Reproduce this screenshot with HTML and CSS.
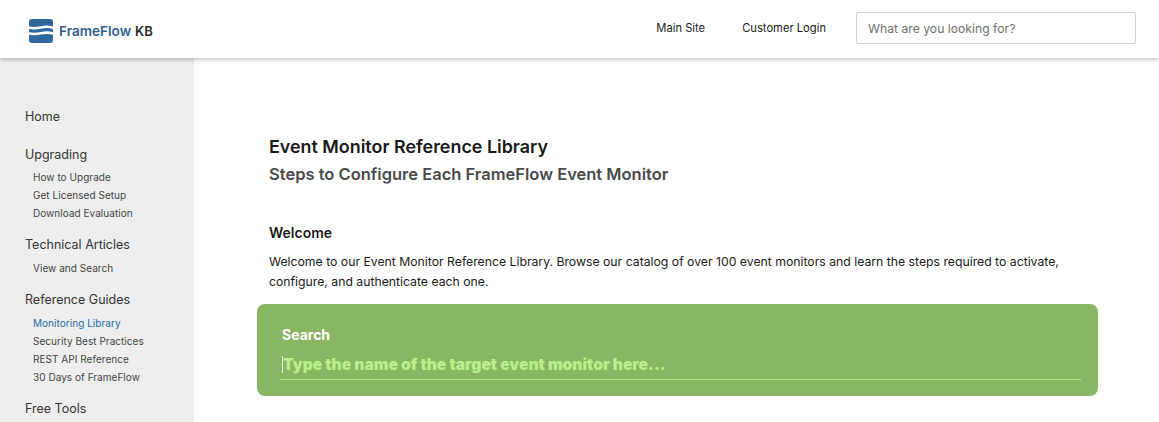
FILE: index.html
```html
<!DOCTYPE html>
<html lang="en">
<head>
<meta charset="utf-8">
<title>FrameFlow KB</title>
<link rel="stylesheet" href="styles.css">
</head>
<body>
<header class="topbar">
  <a class="brand" href="#">
    <svg class="brand-icon" viewBox="0 0 24 24" width="24" height="24" aria-hidden="true">
      <path class="logo-fill" d="M3 0H21A3 3 0 0 1 24 3V7.4C20 6.2 16 6.4 12 7.2C8 8 4 8.3 0 7.5V3A3 3 0 0 1 3 0Z"/>
      <path class="logo-fill" d="M0 10C4 10.8 8 10.5 12 9.7C16 8.9 20 8.8 24 10V13.2C20 12 16 12.1 12 12.9C8 13.7 4 14 0 13.2Z"/>
      <path class="logo-fill" d="M0 15.8C4 16.6 8 16.3 12 15.5C16 14.7 20 14.6 24 15.8V21A3 3 0 0 1 21 24H3A3 3 0 0 1 0 21Z"/>
    </svg>
    <span class="brand-name">FrameFlow</span>
    <span class="brand-kb">KB</span>
  </a>
  <nav class="topnav">
    <a href="#">Main Site</a>
    <a href="#">Customer Login</a>
    <input class="top-search" type="text" placeholder="What are you looking for?">
  </nav>
</header>
<div class="layout">
  <aside class="sidebar">
    <a class="nav-head first" href="#">Home</a>
    <a class="nav-head tight" href="#">Upgrading</a>
    <a class="nav-link" href="#">How to Upgrade</a>
    <a class="nav-link" href="#">Get Licensed Setup</a>
    <a class="nav-link" href="#">Download Evaluation</a>
    <a class="nav-head" href="#">Technical Articles</a>
    <a class="nav-link" href="#">View and Search</a>
    <a class="nav-head" href="#">Reference Guides</a>
    <a class="nav-link active" href="#">Monitoring Library</a>
    <a class="nav-link" href="#">Security Best Practices</a>
    <a class="nav-link" href="#">REST API Reference</a>
    <a class="nav-link" href="#">30 Days of FrameFlow</a>
    <a class="nav-head" href="#">Free Tools</a>
  </aside>
  <main class="content">
    <h1>Event Monitor Reference Library</h1>
    <h2>Steps to Configure Each FrameFlow Event Monitor</h2>
    <h3>Welcome</h3>
    <p>Welcome to our Event Monitor Reference Library. Browse our catalog of over 100 event monitors and learn the steps required to activate, configure, and authenticate each one.</p>
    <section class="search-panel">
      <label class="search-label" for="monitor">Search</label>
      <div class="search-field">
        <span class="caret"></span>
        <input id="monitor" class="search-input" type="text" placeholder="Type the name of the target event monitor here...">
      </div>
    </section>
  </main>
</div>
</body>
</html>
```
FILE: styles.css
```css
* { box-sizing: border-box; }
html, body { height: 100%; }
body {
  margin: 0;
  overflow: hidden;
  background: #fff;
  color: #1a1a1a;
  font-family: Inter, "Liberation Sans", sans-serif;
}
a { text-decoration: none; color: inherit; }
.topbar {
  position: relative;
  z-index: 2;
  height: 58px;
  display: flex;
  align-items: center;
  justify-content: space-between;
  padding: 0 23px 2px 29px;
  background: #fff;
  box-shadow: 0 1px 5px rgba(0, 0, 0, 0.3);
}
.brand { display: flex; align-items: center; margin-top: 6px; }
.brand-icon { display: block; margin-right: 6px; }
.logo-fill { fill: #2f669c; }
.brand-name { font-size: 13.6px; font-weight: 600; color: #2f5f90; }
.brand-kb { font-size: 13px; font-weight: 600; color: #2b2b2b; margin-left: 4px; }
.topnav { display: flex; align-items: center; font-size: 11.2px; font-weight: 400; color: #1a1a1a; }
.topnav a { margin-right: 37px; }
.topnav a:last-of-type { margin-right: 30px; }
.top-search {
  width: 280px;
  height: 32px;
  padding: 0 11px;
  border: 1px solid #d6d6d6;
  border-radius: 2px;
  font: 400 12.2px Inter, "Liberation Sans", sans-serif;
  outline: none;
}
.top-search::placeholder { color: #707070; opacity: 1; }
.layout { display: flex; height: calc(100% - 58px); }
.sidebar {
  flex: none;
  width: 194px;
  height: 100%;
  padding: 51px 0 0 25px;
  background: #eee;
  display: flex;
  flex-direction: column;
  overflow: hidden;
}
.nav-head {
  flex: none;
  font-size: 12.5px;
  line-height: 16px;
  color: #333;
  margin-top: 15px;
  margin-bottom: 6px;
}
.nav-head.first { margin-top: 0; margin-bottom: 7px; }
.nav-head.tight { margin-bottom: 5px; }
.nav-link {
  flex: none;
  font-size: 10px;
  line-height: 18px;
  letter-spacing: 0.04px;
  color: #444;
  padding-left: 8px;
}
.nav-link.active { color: #1c6aa8; }
.content { flex: 1; padding: 77px 61px 0 75px; min-width: 0; }
h1 { margin: 0; font-size: 17.9px; line-height: 24px; font-weight: 600; color: #1a1a1a; }
h2 { margin: 4px 0 0; font-size: 16.5px; line-height: 22px; font-weight: 600; color: #4a4a4a; }
h3 { margin: 38px 0 0; font-size: 14px; line-height: 20px; font-weight: 600; color: #1a1a1a; }
p { margin: 9px 0 0; font-size: 12.24px; line-height: 20px; color: #1a1a1a; }
.search-panel {
  margin: 12px 0 0 -12px;
  height: 92px;
  padding: 22px 17px 0 23px;
  border-radius: 8px;
  background: #89b662;
}
.search-label { display: block; padding-left: 2px; font-size: 14px; line-height: 17px; font-weight: 700; color: #fff; }
.search-field {
  position: relative;
  margin-top: 7px;
  height: 30px;
  padding-left: 2px;
  border-bottom: 1px solid #b4e58a;
}
.caret {
  position: absolute;
  left: 2px;
  top: 6px;
  width: 1px;
  height: 17px;
  background: #fff;
}
.search-input {
  width: 100%;
  height: 100%;
  padding: 0 0 0 1px;
  border: 0;
  background: transparent;
  outline: none;
  font: 900 15.6px Inter, "Liberation Sans", sans-serif;
  color: #fff;
}
.search-input::placeholder { color: #b9ef8c; opacity: 1; }
```
